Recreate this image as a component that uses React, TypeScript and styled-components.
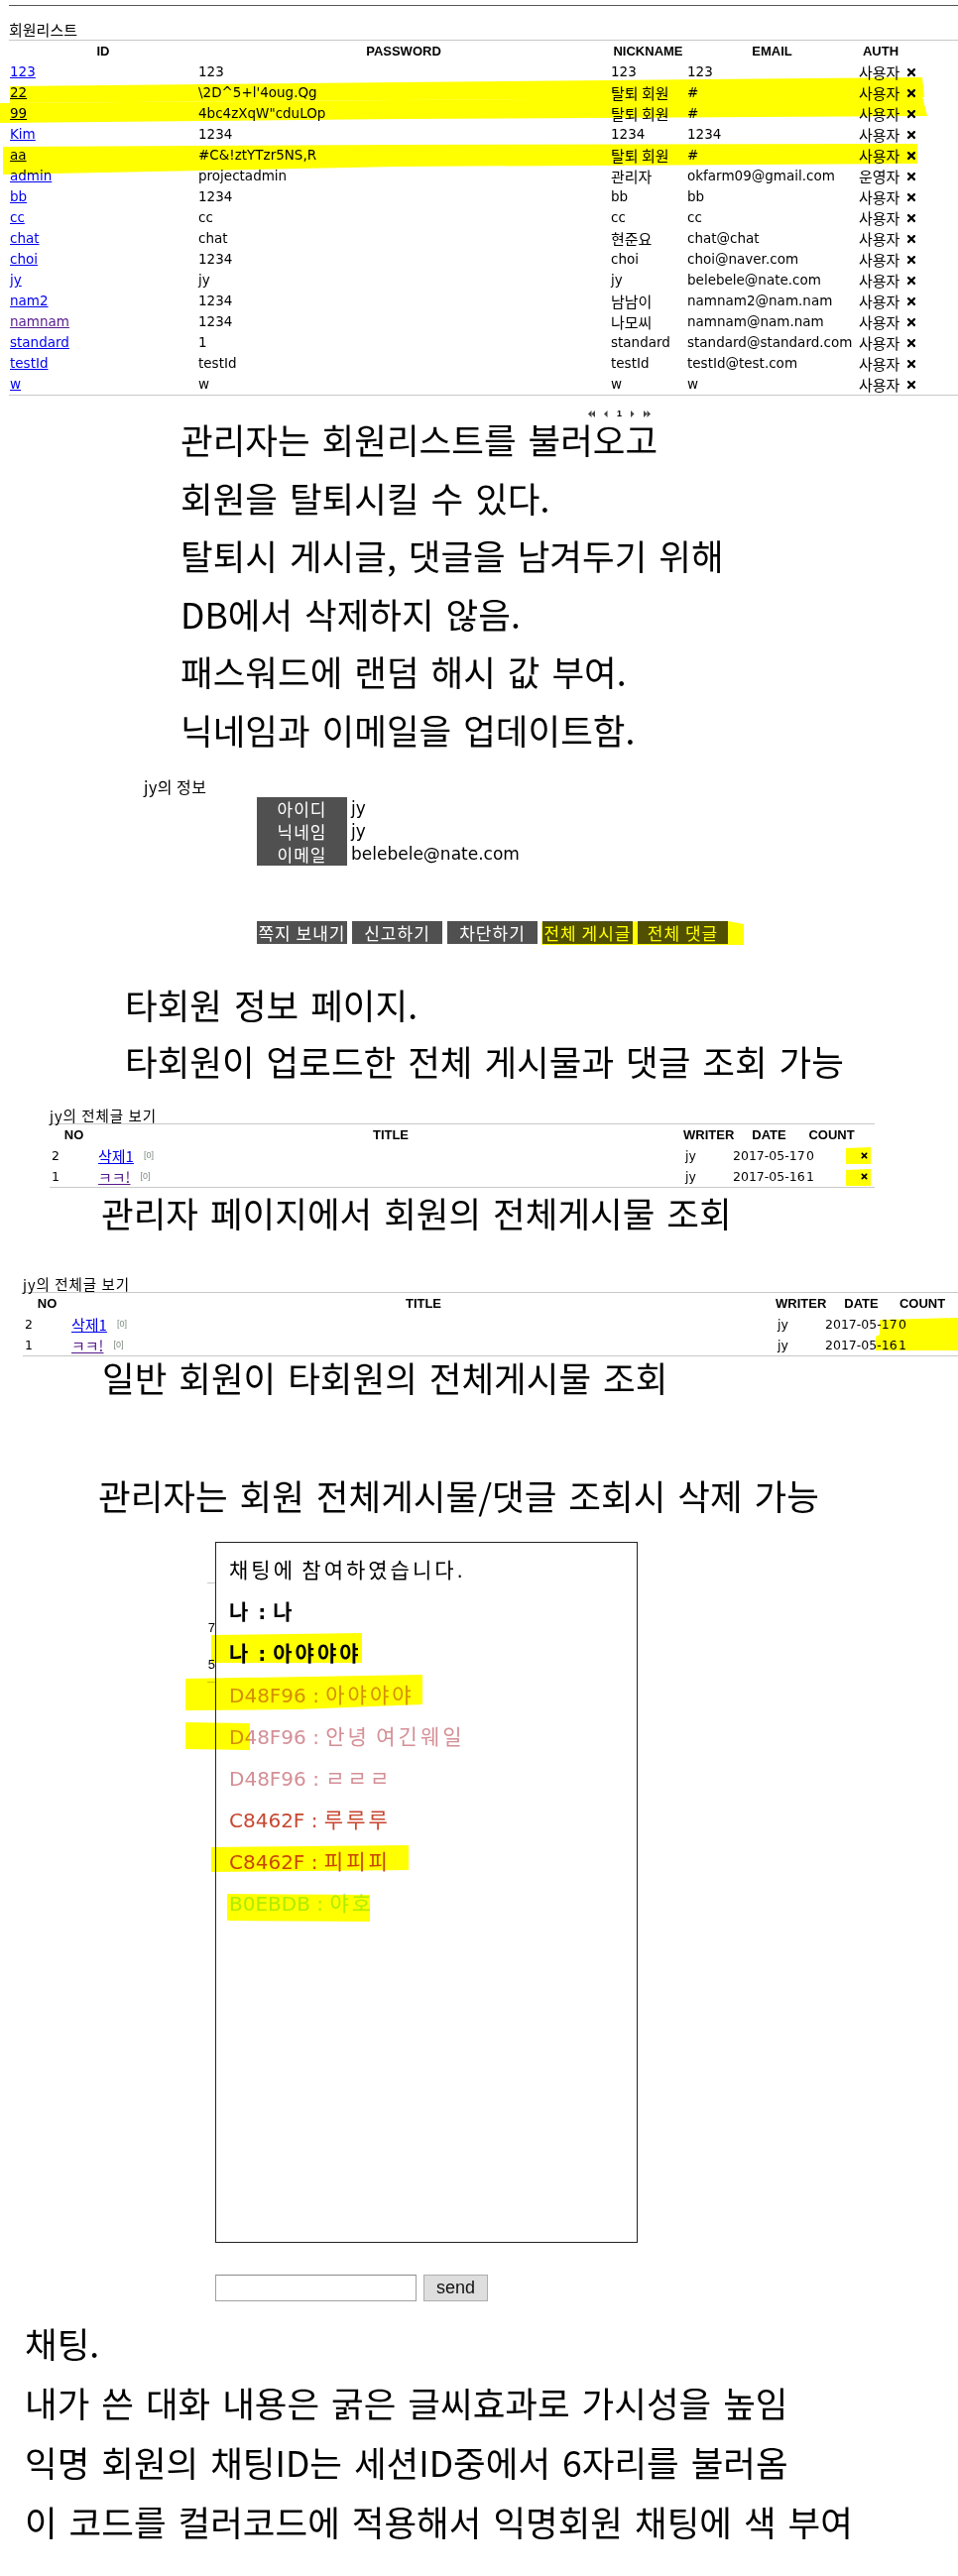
import React from "react";
import styled, { createGlobalStyle } from "styled-components";
import { FaTimes } from "react-icons/fa";

const KR = `"Noto Sans CJK KR", "Noto Sans", sans-serif`;
const LATIN = `"DejaVu Sans", "Noto Sans CJK KR", sans-serif`;
const ARIAL = `"Liberation Sans", "Noto Sans CJK KR", sans-serif`;

const GlobalStyle = createGlobalStyle`
  html, body { margin: 0; padding: 0; background: #fff; }
  body { font-family: ${LATIN}; color: #000; }
  * { box-sizing: border-box; }
`;

const Page = styled.div`
  position: relative;
  width: 966px;
  min-height: 2598px;
  overflow: hidden;
  display: flex;
  flex-direction: column;
`;

/* ---------- member list ---------- */
const MemberSection = styled.section`
  margin-left: 9px;
  padding-top: 5px;
`;
const DarkRule = styled.div`
  height: 1px;
  background: #555;
`;
const ListTitle = styled.div`
  height: 34px;
  padding-top: 14px;
  font: 15px/20px ${KR};
`;
const MemberGrid = styled.div`
  display: grid;
  grid-template-columns: 190px 416px 77px 173px 46px 1fr;
  grid-auto-rows: 21px;
  border-top: 1px solid #c8c8c8;
  border-bottom: 1px solid #c8c8c8;
  font: 13.5px/21px ${LATIN};
`;
const Cell = styled.div<{ $pad?: number }>`
  padding-left: ${(p) => p.$pad ?? 1}px;
  white-space: nowrap;
  display: flex;
  align-items: center;
`;
const HeadCell = styled.div`
  font: bold 13px/21px ${ARIAL};
  text-align: center;
  white-space: nowrap;
`;
const IdLink = styled.a<{ $visited?: boolean }>`
  color: ${(p) => (p.$visited ? "#551a8b" : "#0000ee")};
  text-decoration: underline;
`;
const KorText = styled.span`
  font-family: ${KR};
  font-size: 15px;
`;

const Pager = styled.div`
  display: flex;
  align-items: center;
  gap: 9px;
  height: 24px;
  padding: 12px 0 0 593px;
`;
const PagerNum = styled.span`
  font: bold 9px/9px ${ARIAL};
`;

/* ---------- big captions ---------- */
const BigText = styled.div<{ $indent: number; $lh: number; $mt: number }>`
  font-family: ${KR};
  font-size: 35.5px;
  word-spacing: 4px;
  line-height: ${(p) => p.$lh}px;
  padding-left: ${(p) => p.$indent}px;
  margin-top: ${(p) => p.$mt}px;
  white-space: nowrap;
`;

/* ---------- member info ---------- */
const InfoSection = styled.section`
  margin-top: 17px;
  padding-left: 145px;
`;
const InfoTitle = styled.div`
  font: 16px/20px ${KR};
  letter-spacing: 0.5px;
`;
const InfoTable = styled.div`
  display: grid;
  grid-template-columns: 91px auto;
  grid-auto-rows: 23px;
  justify-content: start;
  margin: 1px 0 0 114px;
`;
const InfoLabel = styled.div`
  background: #505050;
  color: #fff;
  text-align: center;
  font: 17px/23px ${KR};
  letter-spacing: 1px;
`;
const InfoValue = styled.div`
  padding-left: 4px;
  font: 17px/23px ${LATIN};
`;
const ButtonRow = styled.div`
  display: flex;
  gap: 5px;
  margin: 56px 0 0 114px;
`;
const DarkButton = styled.button`
  width: 91px;
  height: 23px;
  padding: 0;
  border: none;
  background: #505050;
  color: #fff;
  font: 17px/23px ${KR};
  letter-spacing: 1px;
  white-space: nowrap;
  overflow: hidden;
`;

/* ---------- posts table ---------- */
const PostsSection = styled.section<{ $left: number; $width: number; $mt: number }>`
  margin-left: ${(p) => p.$left}px;
  width: ${(p) => p.$width}px;
  margin-top: ${(p) => p.$mt}px;
`;
const PostsTitle = styled.div`
  font: 14.5px/16px ${KR};
  letter-spacing: 1px;
`;
const PostsGrid = styled.div<{ $cols: string }>`
  display: grid;
  grid-template-columns: ${(p) => p.$cols};
  grid-auto-rows: 21px;
  border-top: 1px solid #c8c8c8;
  border-bottom: 1px solid #c8c8c8;
  font: 12.5px/21px ${LATIN};
`;
const PostHead = styled.div`
  font: bold 13px/21px ${ARIAL};
  text-align: center;
  white-space: nowrap;
`;
const PostCell = styled.div<{ $pad?: number }>`
  padding-left: ${(p) => p.$pad ?? 0}px;
  white-space: nowrap;
  display: flex;
  align-items: center;
`;
const PostLink = styled.a<{ $visited?: boolean }>`
  color: ${(p) => (p.$visited ? "#551a8b" : "#0000ee")};
  text-decoration: underline;
  font-family: ${KR};
  font-size: 15px;
`;
const ReplyCount = styled.span`
  margin-left: 10px;
  font: 9px/9px ${ARIAL};
  color: #7f8c7f;
`;

/* ---------- chat ---------- */
const ChatArea = styled.div`
  display: flex;
  margin-top: 27px;
  padding-left: 209px;
`;
const PeekStrip = styled.div`
  width: 8px;
  overflow: hidden;
  display: flex;
  flex-direction: column;
  padding-top: 41px;
`;
const PeekRule = styled.div<{ $mt?: number }>`
  height: 1px;
  background: #c8c8c8;
  margin-top: ${(p) => p.$mt ?? 0}px;
`;
const PeekText = styled.div<{ $mt: number }>`
  margin-top: ${(p) => p.$mt}px;
  font: 13px/20px ${ARIAL};
  text-align: right;
  white-space: nowrap;
`;
const ChatBox = styled.div`
  width: 426px;
  height: 707px;
  border: 1px solid #222;
  padding: 7px 0 0 13px;
`;
const ChatLine = styled.div<{ $color?: string; $bold?: boolean }>`
  height: 42px;
  font-family: ${LATIN};
  font-size: 20px;
  line-height: 42px;
  color: ${(p) => p.$color ?? "#000"};
  font-weight: ${(p) => (p.$bold ? 700 : 400)};
  white-space: nowrap;
`;
const ChatKo = styled.span`
  font-family: ${KR};
  font-size: 21px;
  line-height: 1;
  letter-spacing: 3px;
`;
const SendRow = styled.div`
  display: flex;
  gap: 7px;
  margin: 32px 0 0 217px;
`;
const ChatInput = styled.input`
  width: 203px;
  height: 27px;
  border: 1px solid #a0a0a0;
  border-top-color: #8a8a8a;
  background: #fff;
`;
const SendButton = styled.button`
  width: 65px;
  height: 27px;
  padding: 0;
  background: #dedede;
  border: 1px solid #adadad;
  font: 18px/25px ${ARIAL};
  color: #111;
`;

/* ---------- highlighter marks ---------- */
const HighlightLayer = styled.svg`
  position: absolute;
  top: 0;
  left: 0;
  width: 966px;
  height: 2598px;
  pointer-events: none;
  mix-blend-mode: multiply;
`;

function PagerArrow({ dir, double }: { dir: "l" | "r"; double?: boolean }) {
  const w = double ? 7 : 4;
  const tri = (x: number) =>
    dir === "l" ? `${x + 3.5},0 ${x + 3.5},7 ${x},3.5` : `${x},0 ${x},7 ${x + 3.5},3.5`;
  return (
    <svg width={w} height={7} viewBox={`0 0 ${w} 7`}>
      <polygon points={tri(0)} fill="#444" />
      {double && <polygon points={tri(3.5)} fill="#444" />}
    </svg>
  );
}

const isKo = (s: string) => /[\u3131-\uD7A3]/.test(s);

function ChatText({ text }: { text: string }) {
  const parts = text.split(/([\u3131-\uD7A3]+)/).filter(Boolean);
  return (
    <>
      {parts.map((p, i) => (isKo(p) ? <ChatKo key={i}>{p}</ChatKo> : <React.Fragment key={i}>{p}</React.Fragment>))}
    </>
  );
}

const members: { id: string; pw: string; nick: string; email: string; auth: string; visited?: boolean }[] = [
  { id: "123", pw: "123", nick: "123", email: "123", auth: "사용자" },
  { id: "22", pw: "\\2D^5+l'4oug.Qg", nick: "탈퇴 회원", email: "#", auth: "사용자" },
  { id: "99", pw: '4bc4zXqW"cduLOp', nick: "탈퇴 회원", email: "#", auth: "사용자" },
  { id: "Kim", pw: "1234", nick: "1234", email: "1234", auth: "사용자" },
  { id: "aa", pw: "#C&!ztYTzr5NS,R", nick: "탈퇴 회원", email: "#", auth: "사용자" },
  { id: "admin", pw: "projectadmin", nick: "관리자", email: "okfarm09@gmail.com", auth: "운영자" },
  { id: "bb", pw: "1234", nick: "bb", email: "bb", auth: "사용자" },
  { id: "cc", pw: "cc", nick: "cc", email: "cc", auth: "사용자" },
  { id: "chat", pw: "chat", nick: "현준요", email: "chat@chat", auth: "사용자" },
  { id: "choi", pw: "1234", nick: "choi", email: "choi@naver.com", auth: "사용자" },
  { id: "jy", pw: "jy", nick: "jy", email: "belebele@nate.com", auth: "사용자" },
  { id: "nam2", pw: "1234", nick: "남남이", email: "namnam2@nam.nam", auth: "사용자" },
  { id: "namnam", pw: "1234", nick: "나모씨", email: "namnam@nam.nam", auth: "사용자", visited: true },
  { id: "standard", pw: "1", nick: "standard", email: "standard@standard.com", auth: "사용자" },
  { id: "testId", pw: "testId", nick: "testId", email: "testId@test.com", auth: "사용자" },
  { id: "w", pw: "w", nick: "w", email: "w", auth: "사용자" },
];

const posts = [
  { no: "2", title: "삭제1", date: "2017-05-17", count: "0", visited: false },
  { no: "1", title: "ㅋㅋ!", date: "2017-05-16", count: "1", visited: true },
];

const chatLines: { text: string; color?: string; bold?: boolean }[] = [
  { text: "채팅에 참여하였습니다." },
  { text: "나 : 나", bold: true },
  { text: "나 : 아야야야", bold: true },
  { text: "D48F96 : 아야야야", color: "#D48F96" },
  { text: "D48F96 : 안녕 여긴웨일", color: "#D48F96" },
  { text: "D48F96 : ㄹㄹㄹ", color: "#D48F96" },
  { text: "C8462F : 루루루", color: "#C8462F" },
  { text: "C8462F : 피피피", color: "#C8462F" },
  { text: "B0EBDB : 야호", color: "#B0EBDB" },
];

const marks: string[] = [
  "10,87 400,83 930,78 932,98 400,101 10,104",
  "0,104 400,101 930,97 935,117 400,120 0,124",
  "3,148 400,146 925,145 925,165 400,168 3,176",
  "546,930 734,929 750,932 750,953 546,953",
  "853,1158 878,1157 878,1174 853,1174",
  "853,1180 878,1179 878,1196 853,1196",
  "887,1331 966,1329 966,1362 883,1362 883,1348 887,1346",
  "213,1649 365,1647 365,1677 213,1677",
  "187,1693 426,1689 426,1719 300,1724 187,1725",
  "187,1737 252,1738 252,1765 187,1764",
  "213,1863 412,1861 412,1886 213,1888",
  "229,1910 373,1911 373,1938 229,1937",
];

function PostsTable({ cols, withDelete }: { cols: string; withDelete?: boolean }) {
  return (
    <PostsGrid $cols={cols}>
      <PostHead>NO</PostHead>
      <PostHead>TITLE</PostHead>
      <PostHead>WRITER</PostHead>
      <PostHead>DATE</PostHead>
      <PostHead>COUNT</PostHead>
      <PostHead />
      {posts.map((p) => (
        <React.Fragment key={p.no}>
          <PostCell $pad={2}>{p.no}</PostCell>
          <PostCell>
            <PostLink href="#" $visited={p.visited}>
              {p.title}
            </PostLink>
            <ReplyCount>[0]</ReplyCount>
          </PostCell>
          <PostCell $pad={2}>jy</PostCell>
          <PostCell>{p.date}</PostCell>
          <PostCell $pad={1}>{p.count}</PostCell>
          <PostCell $pad={2}>{withDelete && <FaTimes size={9} />}</PostCell>
        </React.Fragment>
      ))}
    </PostsGrid>
  );
}

export default function App() {
  return (
    <Page>
      <GlobalStyle />
      <MemberSection>
        <DarkRule />
        <ListTitle>회원리스트</ListTitle>
        <MemberGrid>
          <HeadCell>ID</HeadCell>
          <HeadCell>PASSWORD</HeadCell>
          <HeadCell>NICKNAME</HeadCell>
          <HeadCell>EMAIL</HeadCell>
          <HeadCell>AUTH</HeadCell>
          <HeadCell />
          {members.map((m) => (
            <React.Fragment key={m.id}>
              <Cell>
                <IdLink href="#" $visited={m.visited}>
                  {m.id}
                </IdLink>
              </Cell>
              <Cell>{m.pw}</Cell>
              <Cell>{isKo(m.nick) ? <KorText>{m.nick}</KorText> : m.nick}</Cell>
              <Cell>{m.email}</Cell>
              <Cell>
                <KorText>{m.auth}</KorText>
              </Cell>
              <Cell $pad={2}>
                <FaTimes size={12} />
              </Cell>
            </React.Fragment>
          ))}
        </MemberGrid>
      </MemberSection>
      <Pager>
        <PagerArrow dir="l" double />
        <PagerArrow dir="l" />
        <PagerNum>1</PagerNum>
        <PagerArrow dir="r" />
        <PagerArrow dir="r" double />
      </Pager>

      <BigText $indent={182} $lh={58.6} $mt={-9}>
        <div>관리자는 회원리스트를 불러오고</div>
        <div>회원을 탈퇴시킬 수 있다.</div>
        <div>탈퇴시 게시글, 댓글을 남겨두기 위해</div>
        <div>DB에서 삭제하지 않음.</div>
        <div>패스워드에 랜덤 해시 값 부여.</div>
        <div>닉네임과 이메일을 업데이트함.</div>
      </BigText>

      <InfoSection>
        <InfoTitle>jy의 정보</InfoTitle>
        <InfoTable>
          <InfoLabel>아이디</InfoLabel>
          <InfoValue>jy</InfoValue>
          <InfoLabel>닉네임</InfoLabel>
          <InfoValue>jy</InfoValue>
          <InfoLabel>이메일</InfoLabel>
          <InfoValue>belebele@nate.com</InfoValue>
        </InfoTable>
        <ButtonRow>
          <DarkButton>쪽지 보내기</DarkButton>
          <DarkButton>신고하기</DarkButton>
          <DarkButton>차단하기</DarkButton>
          <DarkButton>전체 게시글</DarkButton>
          <DarkButton>전체 댓글</DarkButton>
        </ButtonRow>
      </InfoSection>

      <BigText $indent={126} $lh={57} $mt={32}>
        <div>타회원 정보 페이지.</div>
        <div>타회원이 업로드한 전체 게시물과 댓글 조회 가능</div>
      </BigText>

      <PostsSection $left={50} $width={832} $mt={19}>
        <PostsTitle>jy의 전체글 보기</PostsTitle>
        <PostsTable cols="49px 590px 50px 73px 53px 17px" withDelete />
      </PostsSection>

      <BigText $indent={102} $lh={44} $mt={3}>
        관리자 페이지에서 회원의 전체게시물 조회
      </BigText>

      <PostsSection $left={23} $width={943} $mt={42}>
        <PostsTitle>jy의 전체글 보기</PostsTitle>
        <PostsTable cols="49px 710px 50px 73px 50px 11px" />
      </PostsSection>

      <BigText $indent={103} $lh={40} $mt={1}>
        일반 회원이 타회원의 전체게시물 조회
      </BigText>
      <BigText $indent={99} $lh={40} $mt={79}>
        관리자는 회원 전체게시물/댓글 조회시 삭제 가능
      </BigText>

      <ChatArea>
        <PeekStrip>
          <PeekRule />
          <PeekText $mt={35}>7</PeekText>
          <PeekText $mt={17}>5</PeekText>
          <PeekRule $mt={7} />
        </PeekStrip>
        <ChatBox>
          {chatLines.map((l, i) => (
            <ChatLine key={i} $color={l.color} $bold={l.bold}>
              <ChatText text={l.text} />
            </ChatLine>
          ))}
        </ChatBox>
      </ChatArea>
      <SendRow>
        <ChatInput type="text" />
        <SendButton>send</SendButton>
      </SendRow>

      <BigText $indent={25} $lh={60} $mt={12}>
        <div>채팅.</div>
        <div>내가 쓴 대화 내용은 굵은 글씨효과로 가시성을 높임</div>
        <div>익명 회원의 채팅ID는 세션ID중에서 6자리를 불러옴</div>
        <div>이 코드를 컬러코드에 적용해서 익명회원 채팅에 색 부여</div>
      </BigText>

      <HighlightLayer viewBox="0 0 966 2598">
        {marks.map((pts, i) => (
          <polygon key={i} points={pts} fill="#ffff00" />
        ))}
      </HighlightLayer>
    </Page>
  );
}
